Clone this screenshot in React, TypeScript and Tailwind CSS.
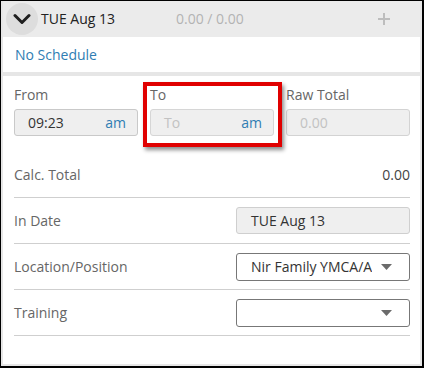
import React from "react";

function Triangle() {
  return (
    <svg width="11" height="6" viewBox="0 0 11 6" className="shrink-0">
      <path d="M0 0 L11 0 L5.5 6 Z" fill="#6b6b6b" />
    </svg>
  );
}

export default function App() {
  return (
    <div className="w-[424px] h-[368px] border-l border-t border-r-2 border-b-2 border-black bg-[#e6e6e6] pl-[2px] pr-[2px] pb-[2px] flex flex-col font-['Open_Sans',sans-serif] text-[14px] relative">
      {/* header */}
      <div className="h-[36px] shrink-0 flex items-center bg-[#ebebeb]">
        <div className="ml-[3px] w-[32px] h-[32px] rounded-full bg-[#dddddd] flex items-center justify-center">
          <svg width="18" height="12" viewBox="0 0 18 12">
            <path d="M2 2.5 L9 9.5 L16 2.5" fill="none" stroke="#1f1f1f" strokeWidth="3" strokeLinecap="round" strokeLinejoin="round" />
          </svg>
        </div>
        <div className="ml-[3px] w-[135px] text-[#222] text-[14px] leading-5">TUE Aug 13</div>
        <div className="text-[#b3b3b3] text-[14px] leading-5">0.00 / 0.00</div>
        <div className="ml-auto mr-[29px] flex items-center">
          <svg width="14" height="14" viewBox="0 0 14 14">
            <path d="M7 1 V13 M1 7 H13" stroke="#bdbdbd" strokeWidth="2" />
          </svg>
        </div>
      </div>
      {/* No schedule */}
      <div className="h-[35px] shrink-0 bg-white flex items-center pl-[12px]">
        <span className="text-[#2f7db3] leading-5">No Schedule</span>
      </div>
      <div className="h-[4px] shrink-0" />
      {/* body */}
      <div className="flex-1 bg-white pl-[11px] pr-[10px] pt-[9px] relative">
        <div className="grid grid-cols-3 gap-x-[12px]">
          <div className="flex flex-col">
            <div className="text-[#666] leading-5">From</div>
            <div className="mt-[4px] h-[27px] rounded-[3px] border border-[#c9c9c9] bg-[#efefef] flex items-center pl-[13px] pr-[11px]">
              <span className="text-[#333]">09:23</span>
              <span className="ml-auto text-[#2f7db3]">am</span>
            </div>
          </div>
          <div className="flex flex-col">
            <div className="text-[#666] leading-5">To</div>
            <div className="mt-[4px] h-[27px] rounded-[3px] border border-[#d6d6d6] bg-[#efefef] flex items-center pl-[13px] pr-[11px]">
              <span className="text-[#c2c2c2]">To</span>
              <span className="ml-auto text-[#2f7db3]">am</span>
            </div>
          </div>
          <div className="flex flex-col">
            <div className="text-[#666] leading-5">Raw Total</div>
            <div className="mt-[4px] h-[27px] rounded-[3px] border border-[#d3d3d3] bg-[#efefef] flex items-center pl-[13px]">
              <span className="text-[#c2c2c2]">0.00</span>
            </div>
          </div>
        </div>

        <div className="mt-[16px] flex flex-col">
          <div className="h-[46px] flex items-center border-b border-[#cfcfcf]">
            <span className="text-[#666]">Calc. Total</span>
            <span className="ml-auto text-[#444]">0.00</span>
          </div>
          <div className="h-[46px] flex items-center border-b border-[#cfcfcf]">
            <span className="text-[#666]">In Date</span>
            <div className="ml-auto w-[174px] h-[27px] rounded-[3px] border border-[#cfcfcf] bg-[#efefef] flex items-center pl-[14px]">
              <span className="text-[#333]">TUE Aug 13</span>
            </div>
          </div>
          <div className="h-[46px] flex items-center border-b border-[#cfcfcf]">
            <span className="text-[#666]">Location/Position</span>
            <div className="ml-auto w-[174px] h-[28px] rounded-[3px] border border-[#777] bg-white flex items-center pl-[14px] pr-[17px]">
              <span className="text-[#333] whitespace-nowrap overflow-hidden w-[121px]">Nir Family YMCA/A</span>
              <span className="ml-auto"><Triangle /></span>
            </div>
          </div>
          <div className="h-[46px] flex items-center border-b border-[#cfcfcf]">
            <span className="text-[#666]">Training</span>
            <div className="ml-auto w-[174px] h-[28px] rounded-[3px] border border-[#777] bg-white flex items-center pr-[17px]">
              <span className="ml-auto"><Triangle /></span>
            </div>
          </div>
        </div>

        {/* red highlight annotation */}
        <div className="absolute left-[140px] top-[6px] w-[139px] h-[65px] border-[4px] border-[#e00000] shadow-[2px_3px_4px_rgba(0,0,0,0.45)]" />
      </div>
    </div>
  );
}
